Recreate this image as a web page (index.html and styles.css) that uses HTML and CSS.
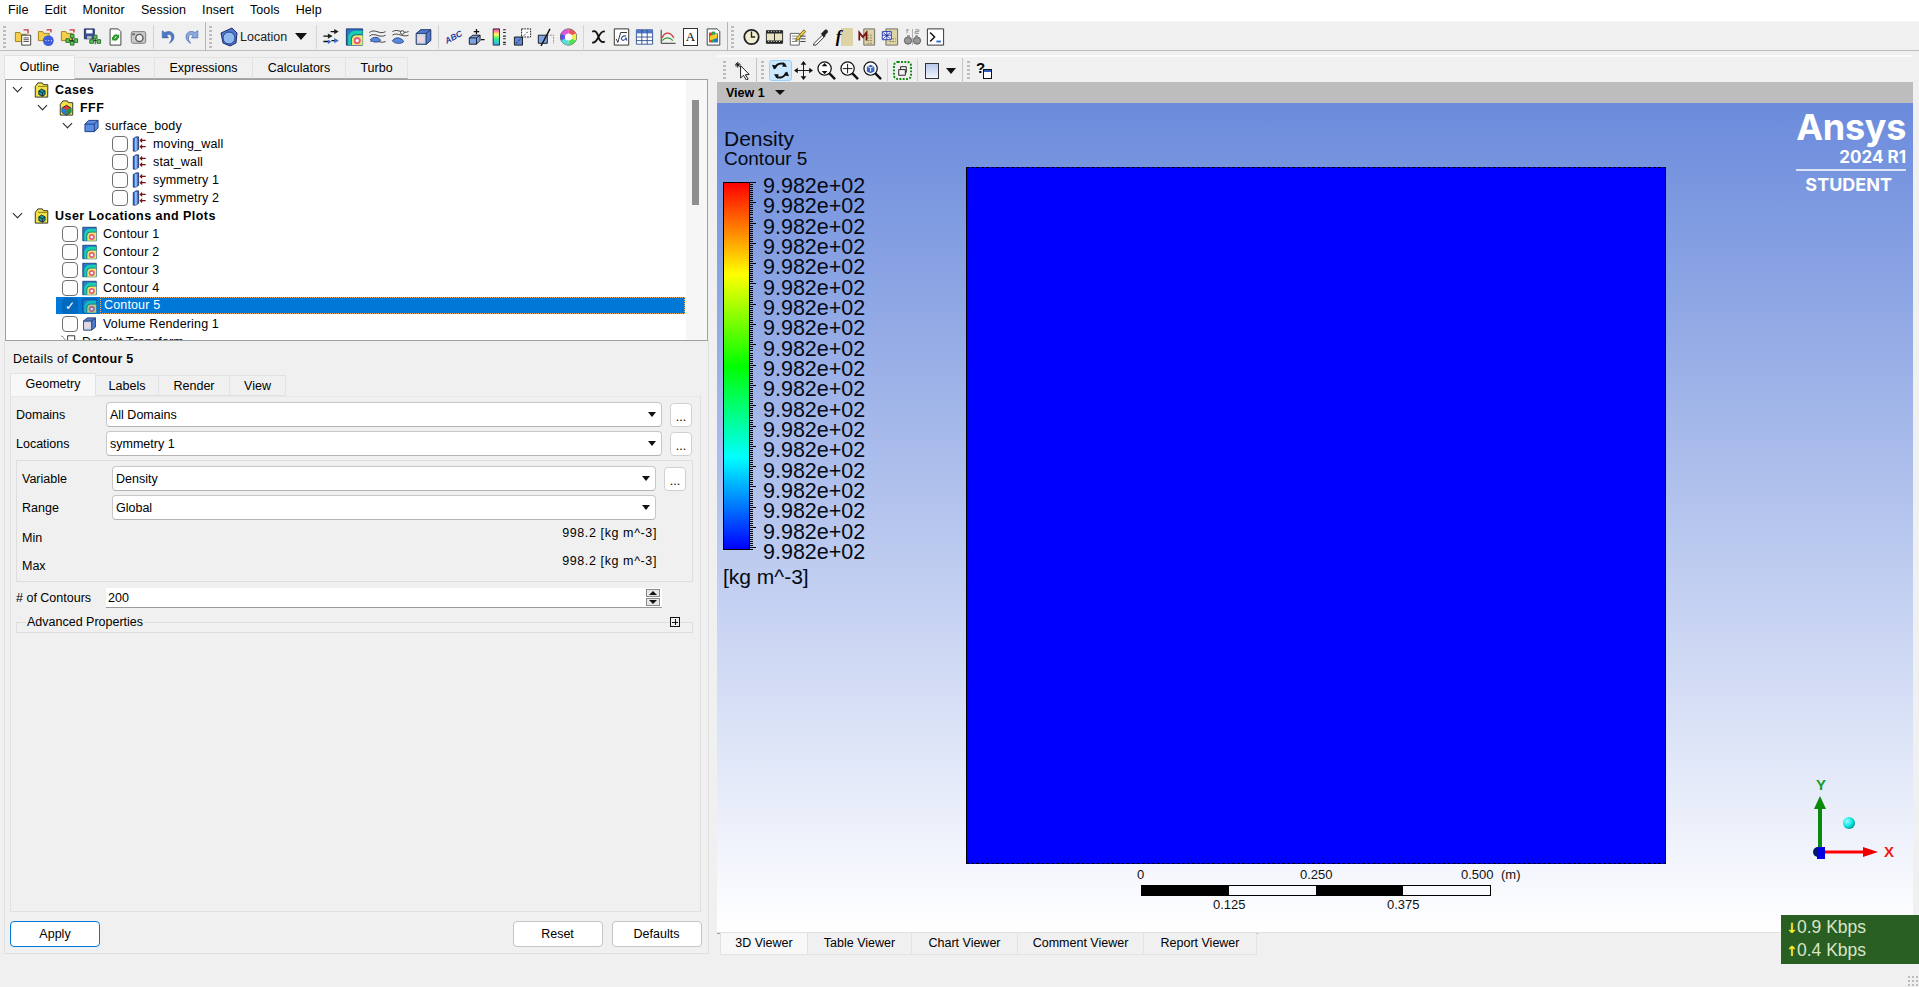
FILE: index.html
```html
<!DOCTYPE html>
<html lang="en">
<head>
  <meta charset="UTF-8" />
  <title>Ansys CFD-Post 2024 R1 Student</title>
  <link rel="stylesheet" href="styles.css">
</head>
<body>
  <!-- icon set -->
  <svg class="defs" width="0" height="0">
    <symbol id="i-folder-doc" viewBox="0 0 20 20"><path d="M1 5h5l1 2h6v8H1z" fill="#f4cf4e" stroke="#a07a10"/><path d="M8 8h10v11H8z" fill="#fff" stroke="#333"/><path d="M10 11h6M10 13h6M10 15h6" stroke="#444"/><path d="M10 2l5 0 0 4" fill="none" stroke="#c33" stroke-width="1.5"/></symbol>
    <symbol id="i-folder-blue" viewBox="0 0 20 20"><path d="M1 4h5l1 2h6v8H1z" fill="#f4cf4e" stroke="#a07a10"/><circle cx="12" cy="14" r="6" fill="#3f5fd8"/><path d="M9 14h1M12 14h1M15 14h1" stroke="#fff"/><path d="M10 2l5 0 0 3" fill="none" stroke="#c33" stroke-width="1.5"/></symbol>
    <symbol id="i-folder-tree" viewBox="0 0 20 20"><path d="M1 4h5l1 2h6v8H1z" fill="#f4cf4e" stroke="#a07a10"/><path d="M10 2l5 0 0 3" fill="none" stroke="#c33" stroke-width="1.5"/><path d="M9 14h8M13 9v9" stroke="#222"/><path d="M11 7h4v4h-4zM6 12h4v4H6zM15 12h4v4h-4zM11 15h4v4h-4z" fill="#5cc35c" stroke="#1d6a1d"/></symbol>
    <symbol id="i-save-tree" viewBox="0 0 20 20"><path d="M1 1h11v11H1z" fill="#3a4f9c" stroke="#1d2a60"/><path d="M3 2h7v4H3z" fill="#fff"/><path d="M4 9h5v3H4z" fill="#bbb"/><path d="M9 14h8M13 10v8" stroke="#222"/><path d="M11 8h4v4h-4zM7 13h4v4H7zM15 13h4v4h-4z" fill="#5cc35c" stroke="#1d6a1d"/></symbol>
    <symbol id="i-reload" viewBox="0 0 20 20"><path d="M4 1h9l3 3v15H4z" fill="#fff" stroke="#333"/><path d="M7 10a3.500 3.500 0 0 1 6-2l1-2v5h-4l2-1a2 2 0 0 0-3 1z" fill="#2e9a2e"/><path d="M13 11a3.500 3.500 0 0 1-6 2l-1 2v-5h4l-2 1a2 2 0 0 0 3-1z" fill="#2e9a2e"/></symbol>
    <symbol id="i-camera" viewBox="0 0 20 20"><rect x="2" y="4" width="16" height="13" rx="2" fill="#c9c9c9" stroke="#777"/><circle cx="11" cy="11" r="4" fill="#eee" stroke="#555" stroke-width="1.500"/><path d="M3 6h3v2H3z" fill="#666"/></symbol>
    <symbol id="i-undo" viewBox="0 0 20 20"><path d="M6 5c5-3 11 0 10 6-.5 3-3 5-5 6 2-3 3-5 2-8-1-2-3-2-5-1l2 3H3V3z" fill="#4d78c8" stroke="#2d4f92" stroke-width=".5"/></symbol>
    <symbol id="i-redo" viewBox="0 0 20 20"><path d="M14 5C9 2 3 5 4 11c.5 3 3 5 5 6-2-3-3-5-2-8 1-2 3-2 5-1l-2 3h7V3z" fill="#8eaae0" stroke="#3d5fa8" stroke-width=".7"/></symbol>
    <symbol id="i-location" viewBox="0 0 20 20"><path d="M2 6l11-5 5 5-1 10-6 3-7-3z" fill="#4f78cf" stroke="#1b2f70"/><circle cx="10" cy="11" r="6" fill="#8fb8ef" stroke="#25408c"/></symbol>
    <symbol id="i-vector" viewBox="0 0 20 20"><path d="M1 9h9M1 15h6M9 4h7M10 14h7" stroke="#111" stroke-width="1.500" fill="none"/><path d="M13 1l5 3-5 3zM6 6l5 3-5 3z" fill="#222"/><path d="M13 11l5 3-5 3zM6 13l4 2-4 3z" fill="#3f6bc8"/></symbol>
    <symbol id="i-contour" viewBox="0 0 20 20"><path d="M1 1h18v18H1z" fill="#2a78c8" stroke="#12306c"/><path d="M3 19V10a8 8 0 0 1 8-7h8v16z" fill="#14d0b0"/><path d="M6 19v-7a6 6 0 0 1 6-5h7v12z" fill="#2a5f78"/><path d="M7 19v-6a5 5 0 0 1 5-5h7v11z" fill="#eaea70"/><circle cx="13" cy="14" r="4" fill="#e85a80"/><circle cx="13" cy="14" r="1.800" fill="#fff"/></symbol>
    <symbol id="i-stream" viewBox="0 0 20 20"><path d="M1 5c6-5 11 3 18-1M1 9c6-5 11 3 18-1M2 15c5-4 10 3 17 0" fill="none" stroke="#333"/><path d="M2 13c4-4 9-3 11 0s-9 4-11 0z" fill="#5a86d8" stroke="#23448e"/></symbol>
    <symbol id="i-iso" viewBox="0 0 20 20"><path d="M1 4c6-4 11 3 18 0M1 8c6-4 11 3 18 0" fill="none" stroke="#333"/><path d="M1 14c4-5 9-3 12 0s-10 5-12 0z" fill="#5a86d8" stroke="#23448e"/><circle cx="12" cy="5" r="2" fill="#fff" stroke="#333"/></symbol>
    <symbol id="i-volume" viewBox="0 0 20 20"><path d="M2 6l5-4h11v12l-5 4H2z" fill="#9fc0e8" stroke="#2e3f70"/><path d="M2 6h11v12H2z" fill="#c9d7e6" stroke="#2e3f70"/><path d="M2 6l5-4h11l-5 4zM13 6l5-4v12l-5 4z" fill="#4f78cf" stroke="#2e3f70"/><circle cx="7" cy="12" r="3.500" fill="#efd6dc"/></symbol>
    <symbol id="i-cube-plus" viewBox="0 0 20 20"><path d="M2 11l4-3h8v6l-4 4H2z" fill="#7ea3e4" stroke="#111"/><path d="M2 11h8v7M10 11l4-3" fill="none" stroke="#111"/><path d="M10 1v6M7 4h6M15 13h4" stroke="#111" stroke-width="1.400"/></symbol>
    <symbol id="i-legend" viewBox="0 0 20 20"><defs><linearGradient id="lg-bar" x1="0" y1="0" x2="0" y2="1"><stop offset="0" stop-color="#f3c"/><stop offset=".35" stop-color="#ff5"/><stop offset=".6" stop-color="#3e8"/><stop offset="1" stop-color="#3af"/></linearGradient></defs><path d="M3 1h7v18H3z" fill="url(#lg-bar)" stroke="#222"/><path d="M14 2h3M14 5h3M14 9h3M14 12h3M14 16h3M14 18h3" stroke="#222" stroke-width="1.200"/></symbol>
    <symbol id="i-dash-box" viewBox="0 0 20 20"><path d="M9 1h10v9H9z" fill="#fff" stroke="#111" stroke-dasharray="2 1"/><path d="M1 10h9v9H1z" fill="#5c86d8" stroke="#111"/><path d="M3 17l14-14" stroke="#111" stroke-dasharray="2 2"/></symbol>
    <symbol id="i-clip" viewBox="0 0 20 20"><path d="M2 8h10v9H2z" fill="#7ea3e4" stroke="#111"/><path d="M12 8h7v9" fill="none" stroke="#888" stroke-dasharray="2 1"/><path d="M5 20L15 1" stroke="#111" stroke-width="1.600"/></symbol>
    <symbol id="i-wheel" viewBox="0 0 20 20"><circle cx="10" cy="10" r="9" fill="#eee" stroke="#444"/><path d="M10 10V1a9 9 0 0 1 8 5z" fill="#e55"/><path d="M10 10l8-4a9 9 0 0 1 0 8z" fill="#ee5"/><path d="M10 10l8 4a9 9 0 0 1-8 5z" fill="#5d5"/><path d="M10 10v9a9 9 0 0 1-8-5z" fill="#5dd"/><path d="M10 10l-8 4a9 9 0 0 1 0-8z" fill="#55e"/><path d="M10 10L2 6a9 9 0 0 1 8-5z" fill="#d5d"/><circle cx="10" cy="10" r="4" fill="#fff"/></symbol>
    <symbol id="i-chi" viewBox="0 0 20 20"><path d="M3 4c4-2 6 2 7 6s4 7 7 5M3 16c3 1 5-2 7-6s4-7 7-6" fill="none" stroke="#111" stroke-width="2"/></symbol>
    <symbol id="i-sqrt" viewBox="0 0 20 20"><path d="M2 1h16v18H2z" fill="#fff" stroke="#222"/><path d="M4 12l2 4 3-11h7" fill="none" stroke="#222"/><path d="M15 9c-3-1-5 1-5 3s3 3 5-1l1 3" fill="none" stroke="#2d4f92" stroke-width="1.200"/></symbol>
    <symbol id="i-table" viewBox="0 0 20 20"><path d="M1 2h18v16H1z" fill="#fff" stroke="#2d4f92"/><path d="M1 2h18v4H1z" fill="#4d78c8"/><path d="M1 10h18M1 14h18M7 2v16M13 2v16" stroke="#2d4f92"/></symbol>
    <symbol id="i-chart" viewBox="0 0 20 20"><path d="M3 2v15h16" fill="none" stroke="#222"/><path d="M4 11c3-7 9-7 13 0" fill="none" stroke="#c33" stroke-width="1.300"/><path d="M4 14c4-4 8-4 12 0" fill="none" stroke="#2a9a2a" stroke-width="1.300"/></symbol>
    <symbol id="i-plot" viewBox="0 0 20 20"><path d="M3 1h11l3 3v15H3z" fill="#fff" stroke="#333"/><path d="M5 5h5v11H5z" fill="#e33"/><path d="M8 4h4v12H8z" fill="#2ba84a"/><path d="M11 6h4v10h-4z" fill="#2c6ed8"/><path d="M6 9l8-3v5l-8 3z" fill="#f2d028"/></symbol>
    <symbol id="i-clock" viewBox="0 0 20 20"><circle cx="10" cy="10" r="8" fill="#f3edcf" stroke="#222" stroke-width="2"/><path d="M10 4v6h4" fill="none" stroke="#222" stroke-width="1.500"/></symbol>
    <symbol id="i-film" viewBox="0 0 20 20"><path d="M1 3h18v14H1z" fill="#e9e2c0" stroke="#222"/><path d="M1 3h18v3H1zM1 14h18v3H1z" fill="#222"/><path d="M10 6v8" stroke="#222"/><path d="M3 4h1M6 4h1M9 4h1M12 4h1M15 4h1M3 15h1M6 15h1M9 15h1M12 15h1M15 15h1" stroke="#fff"/></symbol>
    <symbol id="i-note" viewBox="0 0 20 20"><path d="M2 6h10v13H2z" fill="#fff" stroke="#555"/><path d="M4 9h6M4 12h6M4 15h6" stroke="#777"/><path d="M9 11L17 2l2 2-8 9-3 1z" fill="#ecd04a" stroke="#6f5a10"/><path d="M13 9h6M13 12h6M13 15h6" stroke="#333"/></symbol>
    <symbol id="i-dropper" viewBox="0 0 20 20"><path d="M3 17l9-9 2 2-9 9-3 0z" fill="#fff" stroke="#222"/><path d="M11 6l2-2 2-2c2-1 4 1 3 3l-3 3 1 1-2 1-4-4z" fill="#222"/></symbol>
    <symbol id="i-calc-m" viewBox="0 0 20 20"><path d="M7 1h12v18H7z" fill="#ddd3a6" stroke="#666"/><path d="M11 8h6M11 11h6M11 14h6M11 17h6" stroke="#8a7f55" stroke-dasharray="2 1"/><path d="M2 14V5l4 5 4-5v9" fill="none" stroke="#7a1010" stroke-width="2"/></symbol>
    <symbol id="i-calc-x" viewBox="0 0 20 20"><path d="M6 1h13v18H6z" fill="#ddd3a6" stroke="#666"/><path d="M10 12h7M10 15h7" stroke="#8a7f55" stroke-dasharray="2 1"/><path d="M2 4h10v9H2z" fill="#fff" stroke="#1c2fb0"/><path d="M2 8h10M7 4v9M3 5l8 7M11 5l-8 7" stroke="#1c2fb0"/></symbol>
    <symbol id="i-binoc" viewBox="0 0 20 20"><circle cx="5" cy="14" r="4" fill="#999" stroke="#555"/><circle cx="15" cy="14" r="4" fill="#999" stroke="#555"/><path d="M4 8h3v4H4zM13 8h3v4h-3z" fill="#888"/><path d="M10 1v18" stroke="#aaa"/><path d="M3 2h3M4 2v4M13 2h4v2h-4v2h4" fill="none" stroke="#888"/></symbol>
    <symbol id="i-term" viewBox="0 0 20 20"><path d="M1 1h18v18H1z" fill="#fff" stroke="#222"/><path d="M4 5l5 5-5 5" fill="none" stroke="#111" stroke-width="1.600"/><path d="M11 15h5" stroke="#2c5fd8" stroke-width="2"/></symbol>
    <symbol id="i-pick" viewBox="0 0 20 20"><path d="M2 4h6M5 1v6M3 2l4 4M7 2L3 6" stroke="#111"/><path d="M8 5l9 9-4 .5 3 4.500-2 1-3-5-3 3z" fill="#fff" stroke="#111"/></symbol>
    <symbol id="i-rotate" viewBox="0 0 20 20"><path d="M4 8a7 7 0 0 1 11-4" fill="none" stroke="#111" stroke-width="2"/><path d="M3 9L1 4l6 1zM13 1l4 5-5 0z" fill="#111"/><path d="M16 12a7 7 0 0 1-11 4" fill="none" stroke="#111" stroke-width="2"/><path d="M17 11l2 5-6-1zM7 19l-4-5 5 0z" fill="#111"/></symbol>
    <symbol id="i-pan" viewBox="0 0 20 20"><path d="M10 3v14M3 10h14" stroke="#111"/><path d="M10 0l3 4H7zM10 20l-3-4h6zM0 10l4-3v6zM20 10l-4 3V7z" fill="#111"/></symbol>
    <symbol id="i-zoom" viewBox="0 0 20 20"><circle cx="8" cy="8" r="7" fill="#fff" stroke="#111" stroke-width="1.300"/><path d="M13 13l6 6" stroke="#111" stroke-width="2.500"/><path d="M8 2l3 3.500H5zM8 14l-3-3.500h6z" fill="#111"/></symbol>
    <symbol id="i-zoom-plus" viewBox="0 0 20 20"><circle cx="8" cy="8" r="7" fill="#fff" stroke="#111" stroke-width="1.300"/><path d="M13 13l6 6" stroke="#111" stroke-width="2.500"/><path d="M8 3v10M3 8h10" stroke="#111"/></symbol>
    <symbol id="i-zoom-box" viewBox="0 0 20 20"><circle cx="8" cy="8" r="7" fill="#fff" stroke="#111" stroke-width="1.300"/><path d="M13 13l6 6" stroke="#111" stroke-width="2.500"/><path d="M4 6l4-2 4 2v5l-4 2-4-2z" fill="#3a66c4"/><path d="M8 7v4M5 6l3 1 3-1" stroke="#fff"/></symbol>
    <symbol id="i-fit" viewBox="0 0 20 20"><rect x="1" y="1" width="18" height="18" rx="4" fill="none" stroke="#0a8a0a" stroke-width="2" stroke-dasharray="2 1.500"/><path d="M6 9h7v6H6zM8 9V6h6v6h-1" fill="none" stroke="#222"/></symbol>
    <symbol id="i-case" viewBox="0 0 16 18"><path d="M1 5l3-4h5l1 2h5v14H1z" fill="#f2e24a" stroke="#222"/><path d="M4 5h11v3" fill="none" stroke="#8a7a10"/><path d="M5 10l3-2 4 2v4l-3 2-4-2z" fill="#19a0a0" stroke="#123"/><path d="M5 10l4 2 3-2M9 12v4" fill="none" stroke="#123"/></symbol>
    <symbol id="i-fff" viewBox="0 0 16 18"><path d="M1 5l3-4h5l1 2h5v14H1z" fill="#f2e24a" stroke="#222"/><path d="M3 9l5-3 5 3v5l-5 3-5-3z" fill="#e23b3b" stroke="#123"/><path d="M8 11l5-2v5l-5 3z" fill="#1b9a3c"/><path d="M3 9l5 2v6l-5-3z" fill="#1f7fd4"/></symbol>
    <symbol id="i-body" viewBox="0 0 16 14"><path d="M1 5l4-4h10v8l-4 4H1z" fill="#5b8de4" stroke="#1f3c80"/><path d="M1 5h10v8M11 5l4-4" fill="none" stroke="#1f3c80"/></symbol>
    <symbol id="i-wall" viewBox="0 0 16 18"><path d="M1 3l3-2h3v14l-3 2H1z" fill="#3f78d8" stroke="#14306c"/><path d="M4 2v15" stroke="#fff"/><path d="M15 5H10M15 12H10" stroke="#7a1010" stroke-width="1.400"/><path d="M8 5l3-3v6zM8 12l3-3v6z" fill="#7a1010"/></symbol>
    <symbol id="i-transform" viewBox="0 0 18 18"><path d="M8 2h8v14H8z" fill="#fff" stroke="#222"/><path d="M1 2l6 6M1 7l3 3" stroke="#222" stroke-dasharray="2 1"/></symbol>
  </svg>

  <div class="menubar">
    <span>File</span><span>Edit</span><span>Monitor</span><span>Session</span><span>Insert</span><span>Tools</span><span>Help</span>
  </div>

  <div class="toolbar">
    <div class="grip"></div>
    <button class="tool"><svg><use href="#i-folder-doc"/></svg></button>
    <button class="tool"><svg><use href="#i-folder-blue"/></svg></button>
    <button class="tool"><svg><use href="#i-folder-tree"/></svg></button>
    <button class="tool"><svg><use href="#i-save-tree"/></svg></button>
    <button class="tool"><svg><use href="#i-reload"/></svg></button>
    <button class="tool"><svg><use href="#i-camera"/></svg></button>
    <div class="sep"></div>
    <button class="tool"><svg><use href="#i-undo"/></svg></button>
    <button class="tool"><svg><use href="#i-redo"/></svg></button>
    <div class="sep-heavy"></div>
    <div class="grip"></div>
    <div class="location">
      <svg><use href="#i-location"/></svg>
      <span>Location</span>
      <i class="arrow"></i>
    </div>
    <div class="sep"></div>
    <button class="tool"><svg><use href="#i-vector"/></svg></button>
    <button class="tool"><svg><use href="#i-contour"/></svg></button>
    <button class="tool"><svg><use href="#i-stream"/></svg></button>
    <button class="tool"><svg><use href="#i-iso"/></svg></button>
    <button class="tool"><svg><use href="#i-volume"/></svg></button>
    <div class="sep"></div>
    <button class="tool"><span class="glyph-abc">ABC</span></button>
    <button class="tool"><svg><use href="#i-cube-plus"/></svg></button>
    <button class="tool"><svg><use href="#i-legend"/></svg></button>
    <button class="tool"><svg><use href="#i-dash-box"/></svg></button>
    <button class="tool"><svg><use href="#i-clip"/></svg></button>
    <button class="tool"><svg><use href="#i-wheel"/></svg></button>
    <div class="sep"></div>
    <button class="tool"><svg><use href="#i-chi"/></svg></button>
    <button class="tool"><svg><use href="#i-sqrt"/></svg></button>
    <button class="tool"><svg><use href="#i-table"/></svg></button>
    <button class="tool"><svg><use href="#i-chart"/></svg></button>
    <button class="tool"><span class="glyph-adoc">A</span></button>
    <button class="tool"><svg><use href="#i-plot"/></svg></button>
    <div class="sep-heavy"></div>
    <div class="grip"></div>
    <button class="tool"><svg><use href="#i-clock"/></svg></button>
    <button class="tool"><svg><use href="#i-film"/></svg></button>
    <button class="tool"><svg><use href="#i-note"/></svg></button>
    <button class="tool"><svg><use href="#i-dropper"/></svg></button>
    <button class="tool"><span class="glyph-calc">f</span></button>
    <button class="tool"><svg><use href="#i-calc-m"/></svg></button>
    <button class="tool"><svg><use href="#i-calc-x"/></svg></button>
    <button class="tool"><svg><use href="#i-binoc"/></svg></button>
    <button class="tool"><svg><use href="#i-term"/></svg></button>
  </div>

  <div class="workspace">
    <!-- left side: outline tree and details -->
    <div class="left">
      <div class="tabs">
        <div class="tab active tab-outline">Outline</div>
        <div class="tab tab-variables">Variables</div>
        <div class="tab tab-expressions">Expressions</div>
        <div class="tab tab-calculators">Calculators</div>
        <div class="tab tab-turbo">Turbo</div>
      </div>

      <div class="tree">
        <div class="rows">
          <div class="row d0"><i class="chev"></i><svg class="tree-ic"><use href="#i-case"/></svg><b>Cases</b></div>
          <div class="row d1"><i class="chev"></i><svg class="tree-ic"><use href="#i-fff"/></svg><b>FFF</b></div>
          <div class="row d2"><i class="chev"></i><svg class="tree-ic"><use href="#i-body"/></svg><span>surface_body</span></div>
          <div class="row leaf3"><i class="cb"></i><svg class="tree-ic"><use href="#i-wall"/></svg><span>moving_wall</span></div>
          <div class="row leaf3"><i class="cb"></i><svg class="tree-ic"><use href="#i-wall"/></svg><span>stat_wall</span></div>
          <div class="row leaf3"><i class="cb"></i><svg class="tree-ic"><use href="#i-wall"/></svg><span>symmetry 1</span></div>
          <div class="row leaf3"><i class="cb"></i><svg class="tree-ic"><use href="#i-wall"/></svg><span>symmetry 2</span></div>
          <div class="row d0"><i class="chev"></i><svg class="tree-ic"><use href="#i-case"/></svg><b>User Locations and Plots</b></div>
          <div class="row leaf1"><i class="cb"></i><svg class="tree-ic"><use href="#i-contour"/></svg><span>Contour 1</span></div>
          <div class="row leaf1"><i class="cb"></i><svg class="tree-ic"><use href="#i-contour"/></svg><span>Contour 2</span></div>
          <div class="row leaf1"><i class="cb"></i><svg class="tree-ic"><use href="#i-contour"/></svg><span>Contour 3</span></div>
          <div class="row leaf1"><i class="cb"></i><svg class="tree-ic"><use href="#i-contour"/></svg><span>Contour 4</span></div>
          <div class="row leaf1 selected"><i class="cb checked">✓</i><svg class="tree-ic"><use href="#i-contour"/></svg><span class="sel-text">Contour 5</span></div>
          <div class="row leaf1"><i class="cb"></i><svg class="tree-ic"><use href="#i-volume"/></svg><span>Volume Rendering 1</span></div>
          <div class="row plain"><svg class="tree-ic"><use href="#i-transform"/></svg><span>Default Transform</span></div>
        </div>
        <div class="scrollbar"><div class="thumb"></div></div>
      </div>

      <div class="details">
        <div class="details-title">Details of <b>Contour 5</b></div>
        <div class="tabs subtabs">
          <div class="tab active tab-geometry">Geometry</div>
          <div class="tab tab-labels">Labels</div>
          <div class="tab tab-render">Render</div>
          <div class="tab tab-view">View</div>
        </div>
        <div class="pane">
          <div class="field">
            <label>Domains</label>
            <div class="combo"><span>All Domains</span><i class="caret"></i></div>
            <button class="dots">...</button>
          </div>
          <div class="field">
            <label>Locations</label>
            <div class="combo"><span>symmetry 1</span><i class="caret"></i></div>
            <button class="dots">...</button>
          </div>
          <div class="group">
            <div class="field">
              <label>Variable</label>
              <div class="combo"><span>Density</span><i class="caret"></i></div>
              <button class="dots">...</button>
            </div>
            <div class="field">
              <label>Range</label>
              <div class="combo"><span>Global</span><i class="caret"></i></div>
            </div>
            <div class="readout"><label>Min</label><span>998.2 [kg m^-3]</span></div>
            <div class="readout"><label>Max</label><span>998.2 [kg m^-3]</span></div>
          </div>
          <div class="contours">
            <label># of Contours</label>
            <div class="spin"><span>200</span><div class="spin-btns"><i class="up"></i><i class="down"></i></div></div>
          </div>
          <div class="advanced">
            <span class="adv-title">Advanced Properties</span>
            <i class="adv-plus"></i>
          </div>
        </div>
        <div class="actions">
          <button class="btn primary">Apply</button>
          <div class="spacer"></div>
          <button class="btn">Reset</button>
          <button class="btn">Defaults</button>
        </div>
      </div>
    </div>

    <!-- right side: 3D view -->
    <div class="right">
      <div class="viewtools">
        <div class="grip small"></div>
        <button class="vtool"><svg><use href="#i-pick"/></svg></button>
        <div class="vsep"></div>
        <div class="grip small"></div>
        <button class="vtool on"><svg><use href="#i-rotate"/></svg></button>
        <button class="vtool"><svg><use href="#i-pan"/></svg></button>
        <button class="vtool"><svg><use href="#i-zoom"/></svg></button>
        <button class="vtool"><svg><use href="#i-zoom-plus"/></svg></button>
        <button class="vtool"><svg><use href="#i-zoom-box"/></svg></button>
        <div class="sep"></div>
        <button class="vtool"><svg><use href="#i-fit"/></svg></button>
        <div class="sep"></div>
        <div class="swatch"></div>
        <i class="arrow swatch-arrow"></i>
        <div class="vsep"></div>
        <div class="grip small"></div>
        <button class="vtool help"><span class="glyph-q">?</span><span class="help-doc"></span></button>
      </div>
      <div class="viewbar"><span>View 1</span><i class="arrow"></i></div>

      <div class="viewport">
        <div class="legend">
          <div class="legend-title">Density</div>
          <div class="legend-sub">Contour 5</div>
          <div class="legend-scale">
            <div class="colorbar"></div>
            <div class="ticks"></div>
            <div class="values">
              <span>9.982e+02</span><span>9.982e+02</span><span>9.982e+02</span><span>9.982e+02</span><span>9.982e+02</span>
              <span>9.982e+02</span><span>9.982e+02</span><span>9.982e+02</span><span>9.982e+02</span><span>9.982e+02</span>
              <span>9.982e+02</span><span>9.982e+02</span><span>9.982e+02</span><span>9.982e+02</span><span>9.982e+02</span>
              <span>9.982e+02</span><span>9.982e+02</span><span>9.982e+02</span><span>9.982e+02</span>
            </div>
          </div>
          <div class="legend-unit">[kg m^-3]</div>
        </div>

        <div class="domain"></div>

        <div class="scale">
          <span class="sc-top sc-0">0</span>
          <span class="sc-top sc-250">0.250</span>
          <span class="sc-top sc-500">0.500</span>
          <span class="sc-top sc-m">(m)</span>
          <div class="sc-bar"><i class="blk"></i><i></i><i class="blk"></i><i></i></div>
          <span class="sc-bot sc-125">0.125</span>
          <span class="sc-bot sc-375">0.375</span>
        </div>

        <div class="brand">
          <div class="brand-name">Ansys</div>
          <div class="brand-rel">2024 R1</div>
          <div class="brand-line"></div>
          <div class="brand-ed">STUDENT</div>
        </div>

        <svg class="triad" viewBox="0 0 90 90">
          <defs>
            <radialGradient id="ball" cx=".35" cy=".35" r=".8"><stop offset="0" stop-color="#9ff"/><stop offset=".6" stop-color="#0dd"/><stop offset="1" stop-color="#066"/></radialGradient>
          </defs>
          <path d="M10 72V28" stroke="#0a8a0a" stroke-width="4"/>
          <path d="M10 16l6 13H4z" fill="#0a8a0a"/>
          <path d="M10 72h44" stroke="#f00" stroke-width="3"/>
          <path d="M68 72l-15 5V67z" fill="#e00"/>
          <circle cx="8" cy="72" r="5" fill="#001a66"/>
          <rect x="7" y="67" width="8" height="12" fill="#0000e0"/>
          <circle cx="39" cy="43" r="6" fill="url(#ball)"/>
          <text x="11" y="10" class="ax-y">Y</text>
          <text x="79" y="77" class="ax-x">X</text>
        </svg>
      </div>

      <div class="viewer-tabs">
        <div class="vtab active tab-3d">3D Viewer</div>
        <div class="vtab tab-table">Table Viewer</div>
        <div class="vtab tab-chart">Chart Viewer</div>
        <div class="vtab tab-comment">Comment Viewer</div>
        <div class="vtab tab-report">Report Viewer</div>
      </div>
    </div>
  </div>

  <!-- network meter sits over the window -->
  <div class="netmeter">
    <div><i>↓</i>0.9 Kbps</div>
    <div><i>↑</i>0.4 Kbps</div>
  </div>
  <div class="resize-grip"></div>
</body>
</html>
```

FILE: styles.css
```css
* {
  box-sizing: border-box;
}

html, body {
  margin: 0;
  height: 987px;
  overflow: hidden;
}

body {
  position: relative;
  display: flex;
  flex-direction: column;
  background: #f0f0f0;
  color: #000;
  font-family: "Liberation Sans", Arial, sans-serif;
  font-size: 12.5px;
}

button {
  font: inherit;
  color: inherit;
}

.defs {
  position: absolute;
}

/* menu + main toolbar */
.menubar {
  display: flex;
  align-items: center;
  gap: 16px;
  height: 21px;
  padding: 0 0 1px 8px;
  background: #fff;
  letter-spacing: 0.1px;
}

.toolbar {
  display: flex;
  align-items: center;
  flex: none;
  height: 30px;
  padding: 1px 0 0 3px;
  background: #f0f0f0;
  border-top: 1px solid #f8f8f8;
  border-bottom: 1px solid #bdbdbd;
}

.grip {
  flex: none;
  width: 3px;
  height: 22px;
  margin-right: 6px;
  background: repeating-linear-gradient(#bcbcbc 0 2px, transparent 2px 4px);
}

.tool {
  flex: none;
  width: 23px;
  height: 24px;
  padding: 3px 2px;
  border: 0;
  background: none;
}

.tool svg {
  display: block;
  width: 19px;
  height: 18px;
}

.glyph-abc {
  display: block;
  font-size: 8.5px;
  font-style: italic;
  font-weight: bold;
  line-height: 18px;
  color: #2d3f9c;
  white-space: nowrap;
  transform: rotate(-28deg);
}

.glyph-adoc {
  display: block;
  width: 15px;
  height: 18px;
  margin-left: 2px;
  font-family: "Liberation Serif", serif;
  font-size: 13px;
  line-height: 16px;
  text-align: center;
  background: #fff;
  border: 1px solid #333;
}

.glyph-calc {
  display: block;
  width: 19px;
  height: 18px;
  padding-right: 10px;
  font-family: "Liberation Serif", serif;
  font-size: 17px;
  font-style: italic;
  font-weight: bold;
  line-height: 18px;
  background: linear-gradient(#ddd3a6, #ddd3a6) right / 12px 18px no-repeat;
}

.sep {
  flex: none;
  width: 1px;
  height: 24px;
  margin: 0 3px;
  background: #d4d4d4;
}

.sep-heavy {
  flex: none;
  width: 1px;
  height: 29px;
  margin: 0 3px 0 2px;
  background: #b4b4b4;
}

.location {
  display: flex;
  align-items: center;
  flex: none;
  width: 95px;
  padding-left: 1px;
  color: #222;
}

.location svg {
  flex: none;
  width: 20px;
  height: 20px;
  margin-right: 1px;
}

.arrow {
  flex: none;
  width: 0;
  height: 0;
  border-left: 6px solid transparent;
  border-right: 6px solid transparent;
  border-top: 7px solid #111;
}

.location .arrow {
  margin-left: 8px;
}

/* page split */
.workspace {
  display: flex;
  flex: 1;
  min-height: 0;
}

.left {
  flex: none;
  width: 717px;
  padding: 4px 0 0 4px;
}

.right {
  flex: 1;
  min-width: 0;
  padding: 4px 6px 0 0;
}

/* tabs */
.tabs {
  display: flex;
  align-items: flex-end;
  height: 24px;
}

.tab {
  height: 22px;
  line-height: 21px;
  text-align: center;
  background: #f0f0f0;
  border: 1px solid #e2e2e2;
  border-left: 0;
  border-bottom: 1px solid #a9a9a9;
}

.tab.active {
  height: 24px;
  line-height: 22px;
  background: #f8f8f8;
  border-left: 1px solid #e2e2e2;
  border-bottom: 0;
}

.tab-outline { width: 71px; }
.tab-variables { width: 80px; }
.tab-expressions { width: 98px; }
.tab-calculators { width: 93px; }
.tab-turbo { width: 62px; }
.tab-geometry { width: 86px; }
.tab-labels { width: 63px; }
.tab-render { width: 71px; }
.tab-view { width: 56px; }

/* outline tree */
.tree {
  display: flex;
  width: 703px;
  height: 262px;
  margin-left: 1px;
  background: #fff;
  border: 1px solid #a0a0a0;
}

.rows {
  flex: 1;
  padding-top: 1px;
  overflow: hidden;
  letter-spacing: 0.15px;
}

.rows b {
  letter-spacing: 0.45px;
}

.scrollbar {
  flex: none;
  width: 21px;
  padding: 20px 0 0 6px;
  background: #f6f6f6;
}

.thumb {
  width: 7px;
  height: 105px;
  background: #8f8f8f;
}

.row {
  display: flex;
  align-items: center;
  height: 18px;
  white-space: nowrap;
}

.d0 { padding-left: 2px; }
.d1 { padding-left: 27px; }
.d2 { padding-left: 52px; }
.leaf1 { padding-left: 56px; }
.leaf3 { padding-left: 106px; }
.plain { padding-left: 54px; }

.chev {
  flex: none;
  position: relative;
  width: 20px;
  height: 18px;
  margin-right: 6px;
}

.chev::before {
  content: "";
  position: absolute;
  left: 6px;
  top: 3px;
  width: 6px;
  height: 6px;
  border-right: 1.5px solid #222;
  border-bottom: 1.5px solid #222;
  transform: rotate(45deg);
}

.tree-ic {
  flex: none;
  width: 15px;
  height: 16px;
  margin-right: 6px;
}

.plain .tree-ic {
  width: 17px;
  margin-right: 5px;
}

.cb {
  flex: none;
  width: 16px;
  height: 16px;
  margin-right: 4px;
  background: #fdfdfd;
  border: 1px solid #707070;
  border-radius: 4px;
}

.selected {
  height: 17px;
  margin: 0 1px 1px 50px;
  padding-left: 6px;
  color: #fff;
  background: #0078d7;
}

.selected .cb {
  margin-right: 4px;
  background: #0069bd;
  border: 0;
  color: #fff;
  font-size: 12px;
  font-style: normal;
  line-height: 16px;
  text-align: center;
}

.selected .tree-ic {
  margin-right: 3px;
  opacity: 0.75;
}

.sel-text {
  flex: 1;
  align-self: stretch;
  padding-left: 3px;
  line-height: 15px;
  border: 1px dotted #e8a860;
}

/* details */
.details {
  width: 705px;
  height: 613px;
  border: 1px solid #e0e0e0;
  border-top: 0;
}

.details-title {
  height: 32px;
  padding: 11px 0 0 8px;
  letter-spacing: 0.3px;
}

.subtabs {
  height: 23px;
  margin-left: 5px;
}

.subtabs .tab {
  height: 21px;
  line-height: 20px;
  border-bottom-color: #e0e0e0;
}

.subtabs .tab.active {
  height: 23px;
  line-height: 21px;
}

.pane {
  width: 691px;
  height: 516px;
  margin-left: 5px;
  padding: 5px 6px 0 5px;
  background: #f0f0f0;
  border: 1px solid #e0e0e0;
  border-top-color: #e8e8e8;
}

.field {
  display: flex;
  align-items: center;
  height: 25px;
  margin-bottom: 4px;
}

.field label {
  flex: none;
  width: 90px;
}

.combo {
  display: flex;
  align-items: center;
  justify-content: space-between;
  width: 556px;
  height: 25px;
  padding: 0 5px 0 3px;
  background: #fff;
  border: 1px solid #c8c8c8;
  border-bottom-color: #b4b4b4;
  border-radius: 4px;
}

.caret {
  width: 0;
  height: 0;
  border-left: 4px solid transparent;
  border-right: 4px solid transparent;
  border-top: 5px solid #111;
}

.dots {
  flex: none;
  width: 22px;
  height: 24px;
  margin-left: 8px;
  padding: 4px 0 0;
  background: #fff;
  border: 1px solid #d0d0d0;
  border-radius: 4px;
  line-height: 10px;
}

.group {
  width: 677px;
  height: 122px;
  padding: 5px 5px 0;
  border: 1px solid #dedede;
}

.group .field label {
  width: 90px;
}

.group .combo {
  width: 544px;
}

.readout {
  display: flex;
  align-items: center;
  justify-content: space-between;
  width: 635px;
  height: 28px;
}

.field + .readout {
  margin-top: 0;
}

.readout span {
  margin-bottom: 10px;
  letter-spacing: 0.6px;
}

.contours {
  display: flex;
  align-items: center;
  height: 20px;
  margin-top: 6px;
}

.contours label {
  flex: none;
  width: 90px;
}

.spin {
  display: flex;
  align-items: center;
  justify-content: space-between;
  width: 556px;
  height: 20px;
  padding: 0 2px 0 2px;
  background: #fff;
  border-bottom: 1px solid #9a9a9a;
}

.spin-btns {
  display: flex;
  flex-direction: column;
  gap: 1px;
}

.spin-btns i {
  display: block;
  position: relative;
  width: 14px;
  height: 8px;
  background: #e6e6e6;
  border: 1px solid #8a8a8a;
}

.spin-btns i::after {
  content: "";
  position: absolute;
  left: 2px;
  border-left: 4px solid transparent;
  border-right: 4px solid transparent;
}

.spin-btns .up::after {
  top: 1px;
  border-bottom: 4px solid #111;
}

.spin-btns .down::after {
  top: 1px;
  border-top: 4px solid #111;
}

.advanced {
  position: relative;
  width: 677px;
  height: 11px;
  margin-top: 14px;
  border: 1px solid #dedede;
}

.adv-title {
  position: absolute;
  left: 9px;
  top: -8px;
  padding: 0 1px;
  line-height: 15px;
  background: #f0f0f0;
}

.adv-plus {
  position: absolute;
  right: 12px;
  top: -6px;
  width: 10px;
  height: 10px;
  background:
    linear-gradient(#111, #111) center / 6px 1px no-repeat,
    linear-gradient(#111, #111) center / 1px 6px no-repeat,
    #f0f0f0;
  border: 1px solid #111;
}

.actions {
  display: flex;
  margin: 9px 6.5px 0 5px;
}

.spacer {
  flex: 1;
}

.btn {
  width: 90px;
  height: 26px;
  margin-left: 9px;
  padding: 0;
  background: #fff;
  border: 1px solid #c4c4c4;
  border-radius: 4px;
}

.btn.primary {
  margin-left: 0;
  border-color: #0078d7;
}

/* view toolbar */
.viewtools {
  display: flex;
  align-items: center;
  height: 27px;
  padding: 2px 0 0 6px;
  background: #f0f0f0;
  border-top: 2px solid #fafafa;
}

.grip.small {
  height: 20px;
  margin-right: 5px;
}

.vtool {
  flex: none;
  width: 23px;
  height: 21px;
  padding: 0 1px;
  background: none;
  border: 1px solid transparent;
  border-radius: 3px;
}

.vtool svg {
  display: block;
  width: 19px;
  height: 19px;
}

.vtool.on {
  background: #cce8ff;
  border-color: #99d1ff;
}

.vtool.help {
  position: relative;
  margin-left: -3px;
}

.glyph-q {
  position: absolute;
  left: 3px;
  top: -1px;
  font-size: 15px;
  font-weight: bold;
  line-height: 15px;
}

.help-doc {
  position: absolute;
  left: 10px;
  top: 8px;
  width: 9px;
  height: 10px;
  background: linear-gradient(#2e5fc0 0 2px, #fff 2px);
  border: 1px solid #111;
}

.vsep {
  flex: none;
  width: 1px;
  height: 26px;
  margin: 0 4px 0 2px;
  background: #c4c4c4;
}

.swatch {
  flex: none;
  width: 14px;
  height: 16px;
  margin-left: 4px;
  background: linear-gradient(#b8c8ec, #f0f4fc);
  border: 1px solid #333;
}

.swatch-arrow {
  margin: 0 4px 0 7px;
  border-left-width: 5px;
  border-right-width: 5px;
  border-top-width: 6px;
}

.viewbar {
  display: flex;
  align-items: center;
  gap: 10px;
  height: 21px;
  padding-left: 9px;
  background: #bdbdbd;
  font-weight: bold;
}

.viewbar .arrow {
  border-left-width: 5px;
  border-right-width: 5px;
  border-top-width: 5px;
}

/* 3D canvas, everything in here sits at its scene position */
.viewport {
  position: relative;
  height: 829px;
  overflow: hidden;
  background: linear-gradient(#6b8bdc, #ffffff);
}

.legend {
  position: absolute;
  left: 6px;
  top: 24px;
  color: #050a14;
}

.legend-title {
  margin-left: 1px;
  padding-top: 1px;
  font-size: 21px;
  line-height: 21px;
}

.legend-sub {
  margin-left: 1px;
  font-size: 19px;
  line-height: 20px;
}

.legend-scale {
  display: flex;
  margin-top: 13px;
  height: 368px;
}

.colorbar {
  width: 27px;
  height: 368px;
  background: linear-gradient(#f00, #ff0 25%, #0f0 50%, #0ff 75%, #00f);
  border: 1px solid #000;
}

.ticks {
  width: 6px;
  height: 368px;
  background:
    repeating-linear-gradient(#000 0 1px, transparent 1px 20.3px) left / 6px 100% no-repeat,
    repeating-linear-gradient(#000 0 1px, transparent 1px 2.03px) left / 3px 100% no-repeat;
}

.values {
  display: flex;
  flex-direction: column;
  height: 387px;
  margin: -6px 0 0 7px;
  font-size: 21.5px;
  line-height: 20.33px;
}

.legend-unit {
  margin-top: 15px;
  font-size: 21px;
  line-height: 24px;
}

.domain {
  position: absolute;
  left: 249px;
  top: 64px;
  width: 700px;
  height: 697px;
  background: #0000ff;
  border: 1px solid #000;
  border-top-style: dashed;
  border-bottom-style: dashed;
}

.scale {
  position: absolute;
  left: 424px;
  top: 765px;
  width: 350px;
  height: 46px;
  font-size: 13px;
  line-height: 14px;
  color: #111;
}

.scale span {
  position: absolute;
}

.sc-top { top: 0; }
.sc-bot { top: 30px; }
.sc-0 { left: -4px; }
.sc-250 { left: 159px; }
.sc-500 { left: 320px; }
.sc-m { left: 360px; }
.sc-125 { left: 72px; }
.sc-375 { left: 246px; }

.sc-bar {
  position: absolute;
  left: 0;
  top: 17px;
  display: flex;
  width: 350px;
  height: 11px;
  background: #f9faff;
  border: 1px solid #000;
}

.sc-bar i {
  flex: 1;
}

.sc-bar .blk {
  background: #000;
}

.brand {
  position: absolute;
  right: 7px;
  top: 5px;
  display: flex;
  flex-direction: column;
  align-items: flex-end;
  color: #fff;
  font-family: Inter, "Liberation Sans", sans-serif;
  font-weight: bold;
}

.brand-name {
  font-size: 36px;
  line-height: 39px;
  letter-spacing: -0.3px;
}

.brand-rel {
  font-size: 17px;
  line-height: 20px;
}

.brand-line {
  width: 110px;
  height: 2px;
  margin-top: 2px;
  background: rgba(255, 255, 255, 0.75);
}

.brand-ed {
  margin: 4px 14px 0 0;
  font-size: 18px;
  line-height: 20px;
}

.triad {
  position: absolute;
  left: 1093px;
  top: 677px;
  width: 90px;
  height: 90px;
  overflow: visible;
}

.ax-y {
  font: bold 15px "Liberation Sans", sans-serif;
  fill: #1a9a2a;
  text-anchor: middle;
}

.ax-x {
  font: bold 15px "Liberation Sans", sans-serif;
  fill: #f01818;
  text-anchor: middle;
}

/* bottom tabs */
.viewer-tabs {
  display: flex;
  height: 23px;
  padding-left: 3px;
  border-top: 1px solid #e0e0e0;
  background: linear-gradient(#a0a0a0, #a0a0a0) left top / 541px 1px no-repeat;
}

.vtab {
  height: 22px;
  line-height: 21px;
  text-align: center;
  background: #f0f0f0;
  border-right: 1px solid #e2e2e2;
  border-bottom: 1px solid #e2e2e2;
}

.vtab.active {
  background: #f8f8f8;
  border-left: 1px solid #e2e2e2;
}

.tab-3d { width: 88px; }
.tab-table { width: 104px; }
.tab-chart { width: 106px; }
.tab-comment { width: 126px; }
.tab-report { width: 113px; }

/* overlays */
.netmeter {
  position: absolute;
  left: 1781px;
  top: 915px;
  width: 138px;
  height: 49px;
  padding: 1px 0 0 5px;
  background: #2a5f24;
  color: #d9e6c8;
  font-size: 17.5px;
  line-height: 22px;
}

.netmeter i {
  display: inline-block;
  width: 11px;
  color: #f4f42a;
  font-family: "DejaVu Sans", sans-serif;
  font-size: 14px;
  font-style: normal;
  font-weight: bold;
}

.resize-grip {
  position: absolute;
  right: 1px;
  bottom: 1px;
  width: 11px;
  height: 11px;
  background: radial-gradient(circle at center, #bdbdbd 1.4px, transparent 1.5px) 0 0 / 4px 4px;
}
```
